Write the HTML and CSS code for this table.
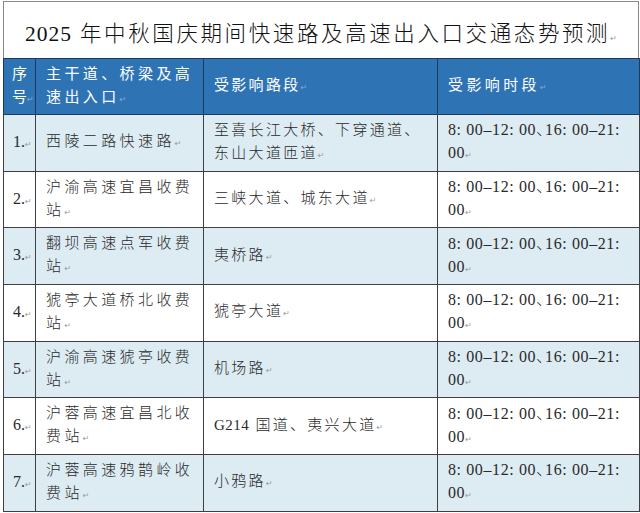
FILE: index.html
```html
<!DOCTYPE html>
<html lang="zh-CN">
<head>
<meta charset="utf-8">
<title>2025年中秋国庆期间快速路及高速出入口交通态势预测</title>
<link rel="stylesheet" href="styles.css">
</head>
<body>
<div class="sheet">
  <div class="title"><span class="num">2025</span> 年中秋国庆期间快速路及高速出入口交通态势预测<span class="pm">↵</span></div>
  <table class="grid">
    <colgroup>
      <col class="c1"><col class="c2"><col class="c3"><col class="c4">
    </colgroup>
    <thead>
      <tr>
        <th class="no">序<span class="nw">号<span class="pm">↵</span></span></th>
        <th class="road">主干道、桥梁及高速出入口<span class="pm">↵</span></th>
        <th class="seg">受影响路段<span class="pm">↵</span></th>
        <th class="time">受影响时段<span class="pm">↵</span></th>
      </tr>
    </thead>
    <tbody>
      <tr class="alt">
        <td class="no">1.<span class="pm">↵</span></td>
        <td class="road">西陵二路快速路<span class="pm">↵</span></td>
        <td class="seg">至喜长江大桥、下穿通道、东山大道匝道<span class="pm">↵</span></td>
        <td class="time">8: 00–12: 00<span class="dun">、</span>16: 00–21: 00<span class="pm">↵</span></td>
      </tr>
      <tr>
        <td class="no">2.<span class="pm">↵</span></td>
        <td class="road">沪渝高速宜昌收费站<span class="pm">↵</span></td>
        <td class="seg">三峡大道、城东大道<span class="pm">↵</span></td>
        <td class="time">8: 00–12: 00<span class="dun">、</span>16: 00–21: 00<span class="pm">↵</span></td>
      </tr>
      <tr class="alt">
        <td class="no">3.<span class="pm">↵</span></td>
        <td class="road">翻坝高速点军收费站<span class="pm">↵</span></td>
        <td class="seg">夷桥路<span class="pm">↵</span></td>
        <td class="time">8: 00–12: 00<span class="dun">、</span>16: 00–21: 00<span class="pm">↵</span></td>
      </tr>
      <tr>
        <td class="no">4.<span class="pm">↵</span></td>
        <td class="road">猇亭大道桥北收费站<span class="pm">↵</span></td>
        <td class="seg">猇亭大道<span class="pm">↵</span></td>
        <td class="time">8: 00–12: 00<span class="dun">、</span>16: 00–21: 00<span class="pm">↵</span></td>
      </tr>
      <tr class="alt">
        <td class="no">5.<span class="pm">↵</span></td>
        <td class="road">沪渝高速猇亭收费站<span class="pm">↵</span></td>
        <td class="seg">机场路<span class="pm">↵</span></td>
        <td class="time">8: 00–12: 00<span class="dun">、</span>16: 00–21: 00<span class="pm">↵</span></td>
      </tr>
      <tr>
        <td class="no">6.<span class="pm">↵</span></td>
        <td class="road">沪蓉高速宜昌北收费站<span class="pm">↵</span></td>
        <td class="seg"><span class="num">G214</span> 国道、夷兴大道<span class="pm">↵</span></td>
        <td class="time">8: 00–12: 00<span class="dun">、</span>16: 00–21: 00<span class="pm">↵</span></td>
      </tr>
      <tr class="alt">
        <td class="no">7.<span class="pm">↵</span></td>
        <td class="road">沪蓉高速鸦鹊岭收费站<span class="pm">↵</span></td>
        <td class="seg">小鸦路<span class="pm">↵</span></td>
        <td class="time">8: 00–12: 00<span class="dun">、</span>16: 00–21: 00<span class="pm">↵</span></td>
      </tr>
    </tbody>
  </table>
</div>
</body>
</html>
```

FILE: styles.css
```css
html, body {
  margin: 0;
  padding: 0;
  background: #ffffff;
}
body {
  font-family: "Liberation Serif", "Noto Sans CJK SC", serif;
  color: #2a2a2a;
}
.sheet {
  width: 636px;
  margin: 1px 0 0 3px;
}
.title {
  box-sizing: border-box;
  height: 57px;
  border: 1px solid #8a8a8a;
  border-bottom: none;
  padding-top: 19px;
  text-align: center;
  font-size: 21.5px;
  line-height: 26px;
  letter-spacing: 2.6px;
  color: #111;
  font-weight: 300;
}
.title .num {
  letter-spacing: 1px;
}
.pm {
  font-family: "DejaVu Sans", sans-serif;
  font-size: 8px;
  letter-spacing: 0;
  color: #9a9a9a;
  font-weight: 400;
}
.nw {
  white-space: nowrap;
}
.grid {
  width: 636px;
  border-collapse: collapse;
  table-layout: fixed;
  border-right: 1.5px solid #7a7a7a;
}
.c1 { width: 32px; }
.c2 { width: 168px; }
.c3 { width: 234px; }
.c4 { width: 202px; }
.grid th, .grid td {
  box-sizing: border-box;
  vertical-align: middle;
  text-align: left;
  font-size: 15px;
  line-height: 23px;
  font-weight: 300;
  padding: 0 4px 0 10px;
}
.grid thead tr {
  height: 56px;
}
.grid th {
  background: #2e74b5;
  color: #ffffff;
  border: 1.5px solid #1f3a5c;
  letter-spacing: 3.4px;
  font-weight: 400;
}
.grid th .pm {
  color: #8fa8c8;
}
.grid th.no {
  padding-left: 8px;
  padding-right: 0;
  letter-spacing: 0;
}
.grid tbody tr {
  height: 56.7px;
}
.grid td {
  border: 1.5px solid #3f3f3f;
}
.grid tbody tr.alt td {
  background: #ddebf3;
}
.grid td.no {
  padding-left: 9px;
  padding-right: 0;
  font-size: 16px;
  letter-spacing: 0;
}
.grid .road {
  letter-spacing: 3.4px;
}
.grid .seg {
  letter-spacing: 2.3px;
}
.grid td.seg .num {
  letter-spacing: 0.5px;
}
.grid td.time {
  font-size: 16px;
  letter-spacing: 0.6px;
  padding-right: 2px;
}
.grid td.time .dun {
  display: inline-block;
  width: 9px;
  letter-spacing: 0;
  overflow: visible;
  vertical-align: baseline;
}
.grid th.time {
  letter-spacing: 3.4px;
}
```
